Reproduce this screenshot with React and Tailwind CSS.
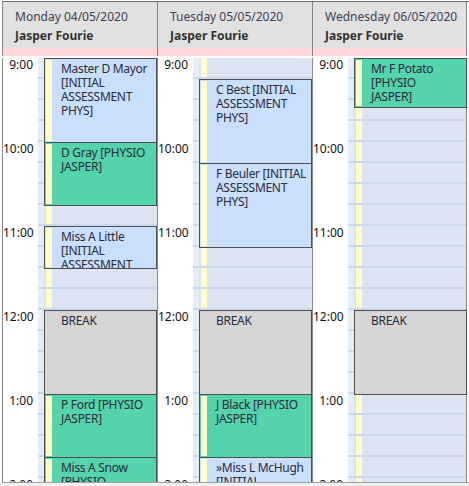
import React from 'react';

// 84px per hour, 21px per 15 minute slot
const HOUR = 84;
const px = (min) => Math.round((min * HOUR) / 60);

const colors = {
  blue: 'bg-[#c9dffc]',
  green: 'bg-[#54d3ac]',
  grey: 'bg-[#d6d6d6]',
};

const INITIAL = ['[INITIAL', 'ASSESSMENT', 'PHYS]'];

const days = [
  {
    date: 'Monday 04/05/2020',
    appts: [
      { start: 0, end: 60, lines: ['Master D Mayor', ...INITIAL], kind: 'blue' },
      { start: 60, end: 105, lines: ['D Gray [PHYSIO', 'JASPER]'], kind: 'green' },
      { start: 120, end: 150, lines: ['Miss A Little', ...INITIAL], kind: 'blue' },
      { start: 180, end: 240, lines: ['BREAK'], kind: 'grey' },
      { start: 240, end: 285, lines: ['P Ford [PHYSIO', 'JASPER]'], kind: 'green' },
      { start: 285, end: 330, lines: ['Miss A Snow', '[PHYSIO', 'JASPER]'], kind: 'green' },
    ],
  },
  {
    date: 'Tuesday 05/05/2020',
    appts: [
      { start: 15, end: 75, lines: ['C Best [INITIAL', 'ASSESSMENT', 'PHYS]'], kind: 'blue' },
      { start: 75, end: 135, lines: ['F Beuler [INITIAL', 'ASSESSMENT', 'PHYS]'], kind: 'blue' },
      { start: 180, end: 240, lines: ['BREAK'], kind: 'grey' },
      { start: 240, end: 285, lines: ['J Black [PHYSIO', 'JASPER]'], kind: 'green' },
      { start: 285, end: 345, lines: ['»Miss L McHugh', ...INITIAL], kind: 'blue' },
    ],
  },
  {
    date: 'Wednesday 06/05/2020',
    appts: [
      { start: 0, end: 35, lines: ['Mr F Potato', '[PHYSIO', 'JASPER]'], kind: 'green' },
      { start: 180, end: 240, lines: ['BREAK'], kind: 'grey' },
    ],
  },
];

const hours = ['9:00', '10:00', '11:00', '12:00', '1:00', '2:00'];
const slots = Array.from({ length: 24 }, (_, i) => i);

const Appointment = ({ a }) => (
  <div
    className={`absolute left-0 w-[113px] border border-[#4f4f4f] overflow-hidden ${colors[a.kind]}`}
    style={{ top: px(a.start), height: px(a.end - a.start) + 1 }}
  >
    {a.kind !== 'grey' && <div className="absolute left-[1px] top-[1px] bottom-[1px] w-[6px] bg-[#ffffcc]" />}
    <div className="pl-[16px] pt-[3px] text-[12px] leading-[14px] tracking-[-0.3px] whitespace-nowrap text-[#2b2b3d]">
      {a.lines.map((l, i) => (
        <div key={i}>{l}</div>
      ))}
    </div>
  </div>
);

const DayColumn = ({ day, last }) => (
  <div className={`flex w-[155px] h-full border-l border-[#8a8a8a] ${last ? 'border-r' : ''}`}>
    {/* time gutter */}
    <div className="w-[35px] shrink-0 bg-white">
      {hours.map((h) => (
        <div key={h} className="h-[84px] pr-[5px] text-right text-[12px] leading-[14px] text-[#111]">
          {h}
        </div>
      ))}
    </div>
    {/* slots */}
    <div className="flex-1 relative">
      {slots.map((s) => (
        <div key={s} className="flex h-[21px]">
          <div className="w-[6px] bg-[#e5edf7] border-b-2 border-[#c9d8eb]" />
          <div className="flex-1 bg-[#dae4f2] border-b-2 border-[#c9d8eb] pl-[2px]">
            <div className="w-[6px] h-full bg-[#ffffcc]" />
          </div>
        </div>
      ))}
      <div className="absolute inset-y-0 left-[6px] right-0">
        {day.appts.map((a, i) => (
          <Appointment key={i} a={a} />
        ))}
      </div>
    </div>
  </div>
);

export default function App() {
  return (
    <div className="w-[469px] h-[486px] bg-[#f0f0f0] overflow-hidden font-['Noto_Sans',sans-serif]">
      <div className="bg-white pt-[1px] pl-[2px]">
        {/* header */}
        <div className="flex border-t border-[#6f6f6f]">
          {days.map((d, i) => (
            <div key={d.date} className={`w-[155px] border-l border-[#858585] ${i === 2 ? 'border-r' : ''}`}>
              <div className="h-[46px] bg-[#e1e1e1] pl-[12px] pt-[8px]">
                <div className="text-[12px] leading-[14px] text-[#3f3f58]">{d.date}</div>
                <div className="mt-[5px] text-[12px] leading-[14px] font-bold text-[#333]">Jasper Fourie</div>
              </div>
              <div className="h-[8px] bg-[#ffd9d9]" />
            </div>
          ))}
        </div>
        {/* body */}
        <div className="h-[426px] pt-[2px] overflow-hidden flex bg-white">
          {days.map((d, i) => (
            <DayColumn key={d.date} day={d} last={i === 2} />
          ))}
        </div>
      </div>
      <div className="ml-[2px] h-[4px] border-t border-[#a0a0a0] bg-[#f0f0f0]" />
    </div>
  );
}
